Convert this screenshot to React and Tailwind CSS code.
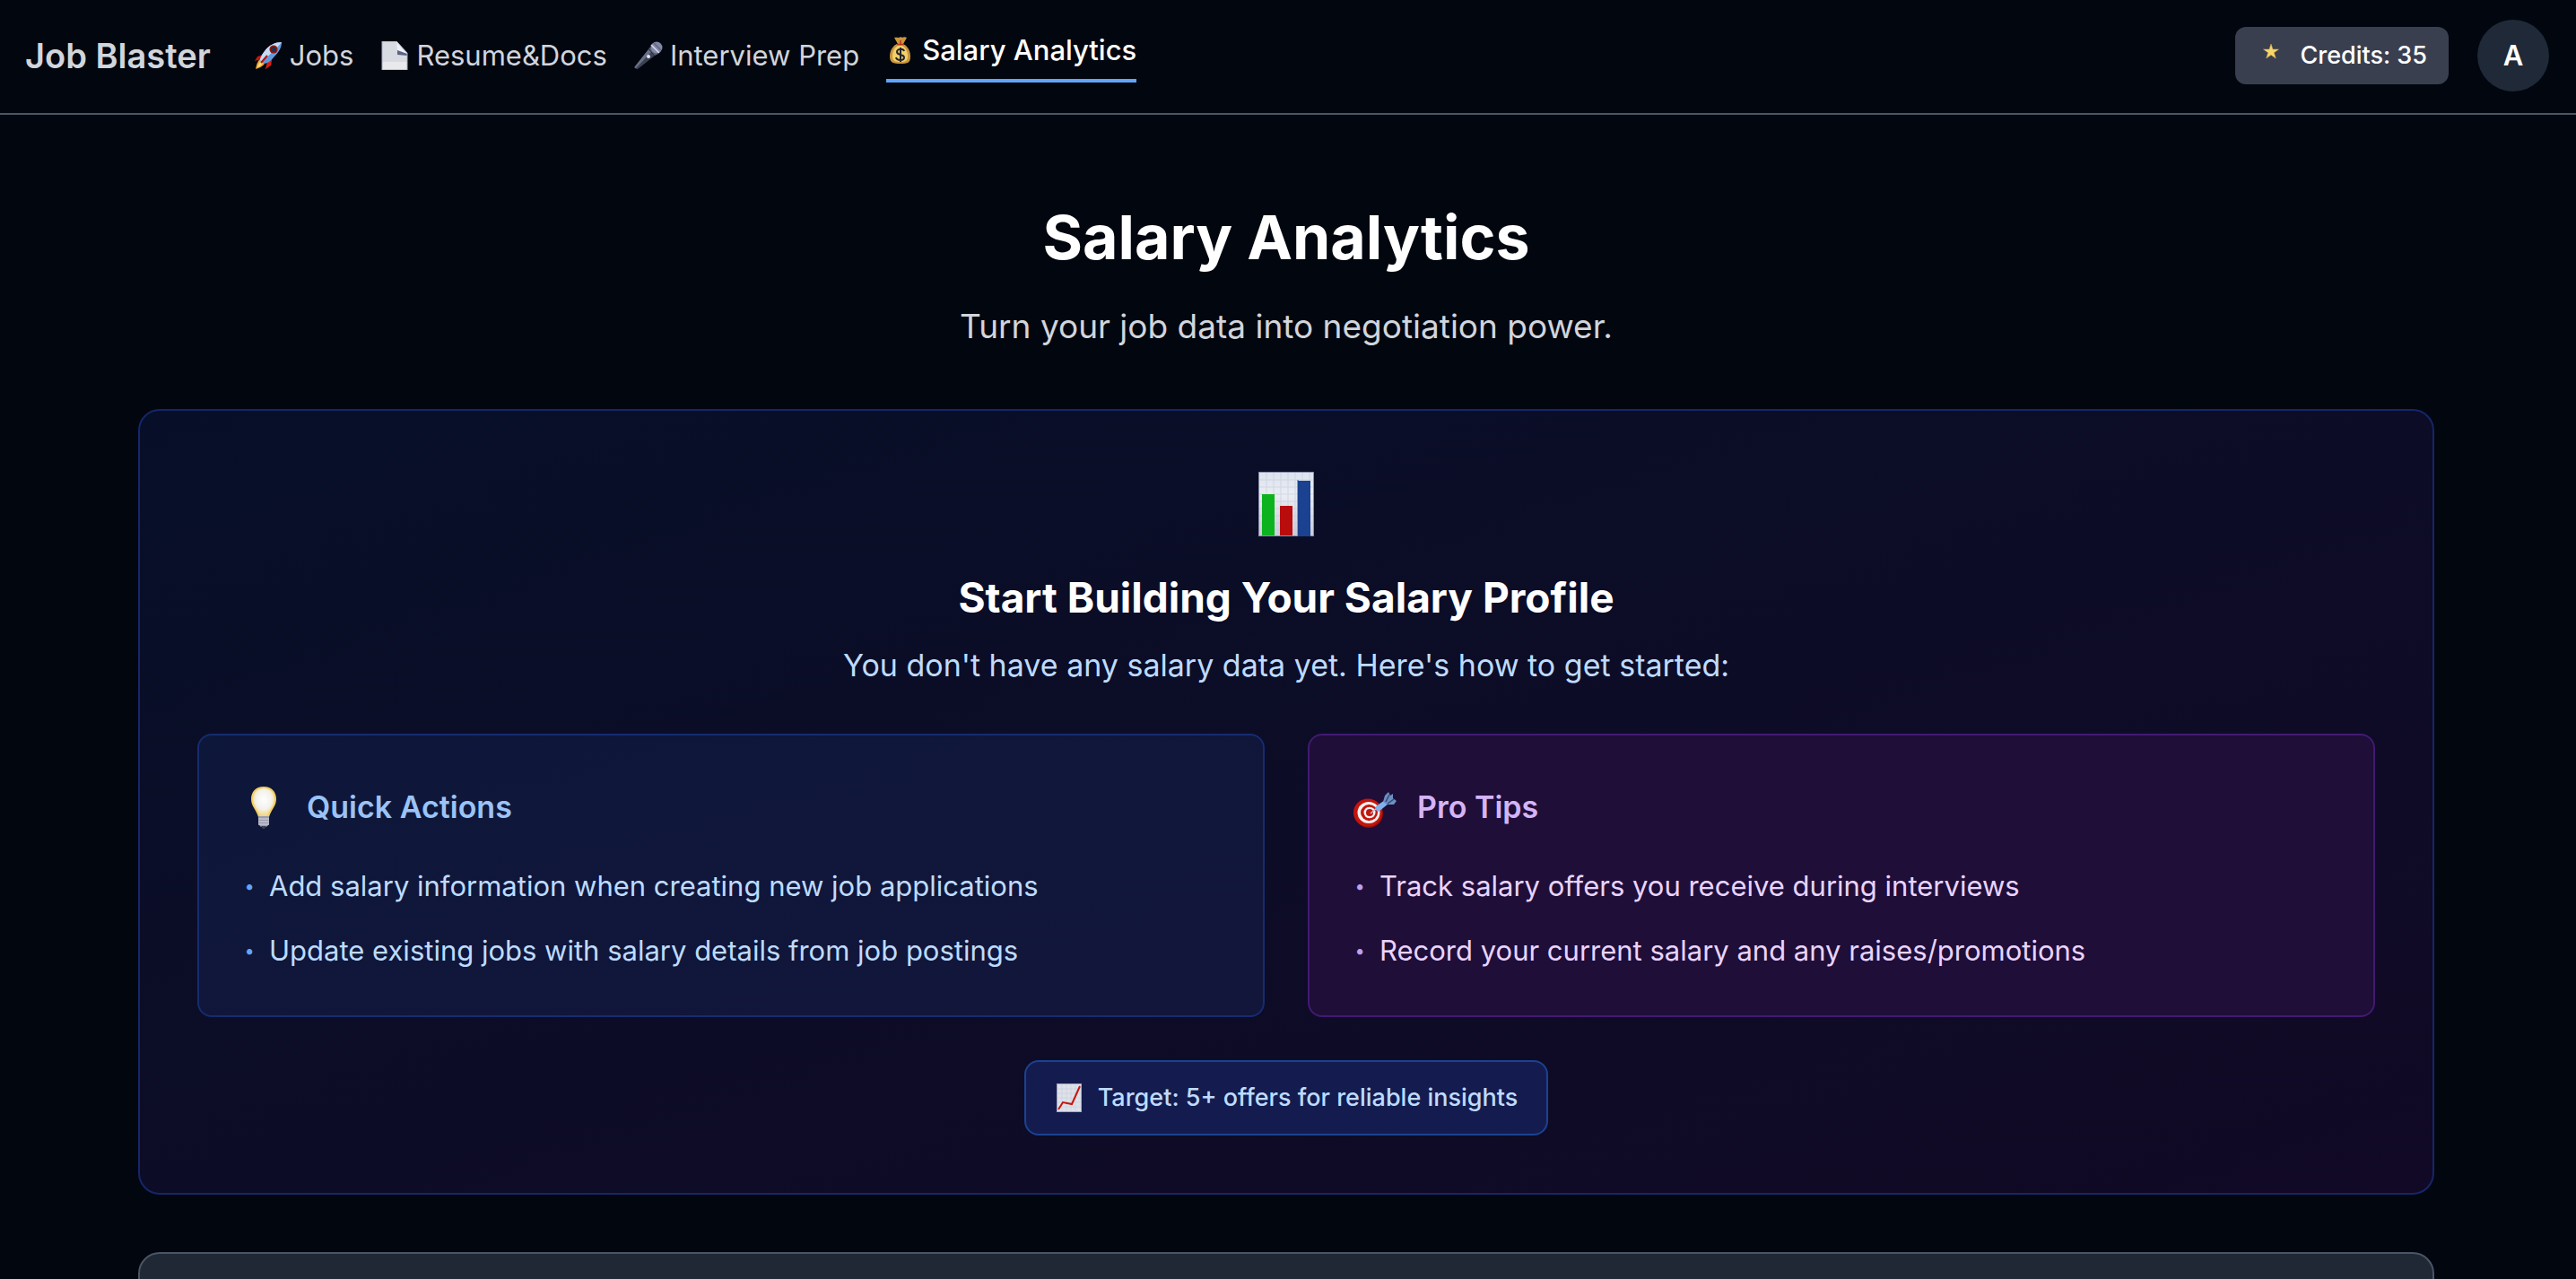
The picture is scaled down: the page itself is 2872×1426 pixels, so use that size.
import React from 'react';

const RocketIcon = () => (
  <svg viewBox="0 0 32 32" className="size-8 shrink-0" aria-hidden="true">
    <path d="M10 15 4 17 1 22 8 20 12 21z" fill="#c4170c" />
    <path d="M17 21 16 27 12 31 14 30 19 26 20 20z" fill="#c4170c" />
    <path d="M15 23 20 20 19 27 13 31z" fill="#d81f10" />
    <path d="M7 20C4 22 3 26 2 31 6 30 10 28 12 25z" fill="#f0a830" />
    <path d="M8 22C6 24 5 26 4 29 7 28 9 26 10 24z" fill="#ffe27a" />
    <path d="M31 1C24 1 17 4 12 11 9 15 7 18 7 21L11 25C15 25 19 22 22 18 28 12 31 7 31 1z" fill="#5f9be0" />
    <path d="M31 1C24 1 17 4 12 11 9 15 7 18 7 21L9 23C15 17 25 9 31 1z" fill="#c9dbf2" />
    <circle cx="22" cy="9" r="4.6" fill="#9c150e" />
    <circle cx="22" cy="9" r="3" fill="#22304f" />
    <path d="M8 24 15 16" stroke="#b3160d" strokeWidth="2" />
  </svg>
);

const DocIcon = () => (
  <svg viewBox="0 0 32 32" className="size-8 shrink-0" aria-hidden="true">
    <path d="M2 0H18L30 13V32H2z" fill="#d9dbe3" />
    <path d="M2 23H30V32H2z" fill="#e8e9ec" />
    <path d="M18 0 30 14 20 12C18 8 19 4 18 0z" fill="#eef1f8" />
    <path d="M19 10 30 14V16L19 15z" fill="#5b6583" />
    <path d="M2 0H18L30 13V32H2z" fill="none" stroke="#a9aec2" strokeWidth="1" />
  </svg>
);

const MicIcon = () => (
  <svg viewBox="0 0 32 32" className="size-8 shrink-0" aria-hidden="true">
    <path d="M16 9 23 16 4 31C2 31 0 30 1 28z" fill="#3a4254" />
    <path d="M16 9 19 12 2 30C0 30 0 29 1 28z" fill="#687086" />
    <path d="M16 8 19 6 27 14 23 16z" fill="#545c74" />
    <circle cx="25" cy="7" r="6.5" fill="#8287a5" />
    <path d="M19 4 28 13" stroke="#d8dcea" strokeWidth="1.5" />
    <path d="M22 2 30 10" stroke="#5d6382" strokeWidth="1.5" />
    <circle cx="16" cy="17" r="2" fill="#e6e9f2" />
  </svg>
);

const MoneyIcon = () => (
  <svg viewBox="0 0 32 32" className="size-8 shrink-0" aria-hidden="true">
    <path d="M9 2C12 1 14 3 16 1 18 3 20 0 23 2L19 9H13z" fill="#c8963f" />
    <path d="M12 9C6 12 4 18 4 23 4 30 8 31 16 31 24 31 27 30 27 23 27 18 25 12 19 9z" fill="#c8963f" />
    <path d="M13 11C9 13 7 18 7 23 7 28 10 29 16 29 21 29 24 28 24 23 24 18 22 13 18 11z" fill="#f3cf68" />
    <path d="M12 9.5H20M16 5V10" stroke="#c0321a" strokeWidth="1.5" />
    <path
      d="M20 17C19 14 12 14 12 18 12 22 20 20 20 24 20 28 12 28 11 24M16 13V29"
      fill="none"
      stroke="#23252d"
      strokeWidth="2"
    />
  </svg>
);

const StarIcon = () => (
  <svg viewBox="0 0 32 32" className="size-8 shrink-0" aria-hidden="true">
    <path
      d="M16 3 18 9H24.5L19.3 12.7 21.3 19 16 15.2 10.7 19 12.7 12.7 7.5 9H14z"
      fill="#f6d66b"
      stroke="#dba63b"
      strokeWidth="0.5"
    />
  </svg>
);

const BarChartIcon = () => (
  <svg viewBox="0 0 64 80" className="h-20 w-16" aria-hidden="true">
    <defs>
      <linearGradient id="barPaper" x1="0" y1="0" x2="0" y2="1">
        <stop offset="0" stopColor="#dde3ee" />
        <stop offset="0.35" stopColor="#e9edf4" />
        <stop offset="1" stopColor="#c9ccda" />
      </linearGradient>
    </defs>
    <rect x="1" y="4" width="62" height="72" fill="#8b90ab" />
    <rect x="2" y="5" width="60" height="70" fill="url(#barPaper)" />
    <path
      d="M2 13H62M2 21H62M2 29H62M2 37H62M2 45H62M2 53H62M2 61H62M2 69H62M10 5V75M18 5V75M26 5V75M34 5V75M42 5V75M50 5V75M58 5V75"
      stroke="#c5cad8"
      strokeWidth="1"
      opacity="0.6"
    />
    <rect x="5" y="29" width="14" height="46" fill="#0db31e" />
    <rect x="25" y="42" width="14" height="33" fill="#b80d0c" />
    <rect x="44" y="13" width="2" height="62" fill="#6fa3e6" />
    <rect x="45" y="14" width="14" height="62" fill="#1a4290" />
  </svg>
);

const BulbIcon = () => (
  <svg viewBox="0 0 48 48" className="size-12 shrink-0" aria-hidden="true">
    <defs>
      <radialGradient id="bulbGlass" cx="0.5" cy="0.4" r="0.6">
        <stop offset="0" stopColor="#ffffff" />
        <stop offset="0.6" stopColor="#f3f1ea" />
        <stop offset="1" stopColor="#f2d478" />
      </radialGradient>
    </defs>
    <path d="M24 1C15 1 10 7 10 15 10 23 16 27 18 35H30C32 27 38 23 38 15 38 7 33 1 24 1z" fill="#f2cf63" />
    <path d="M24 3C16 3 12 8 12 15 12 22 18 27 20 34H28C30 27 36 22 36 15 36 8 32 3 24 3z" fill="url(#bulbGlass)" />
    <path d="M18 34H30V43L27 46H21L18 43z" fill="#9a9cb0" />
    <path d="M18 37H30M18 40H30M18 43H30" stroke="#d9dae4" strokeWidth="1" />
    <path d="M21 45H27L25 48H23z" fill="#3c4053" />
  </svg>
);

const TargetIcon = () => (
  <svg viewBox="0 0 48 48" className="size-12 shrink-0 overflow-visible" aria-hidden="true">
    <ellipse cx="18" cy="31" rx="16" ry="16" fill="#8f0f0a" />
    <ellipse cx="17" cy="30" rx="16" ry="15.5" fill="#c5150d" />
    <ellipse cx="18" cy="30" rx="12.5" ry="12" fill="#f5f1ef" />
    <ellipse cx="18.5" cy="30" rx="9.5" ry="9" fill="#c5150d" />
    <ellipse cx="19" cy="30" rx="6.5" ry="6.2" fill="#f5f1ef" />
    <ellipse cx="19" cy="30" rx="4" ry="4" fill="#c5150d" />
    <path d="M20 31 27 25" stroke="#b7c5dd" strokeWidth="1.5" />
    <path d="M26 23 36 16 40 20 29 29C27 29 25 26 26 23z" fill="#7fb2ec" />
    <path d="M34 18 36 11 40 7 42 11 45 9 45 14 49 17 46 21 38 21z" fill="#6c8fc4" />
    <path d="M37 18 41 10M39 20 46 15" stroke="#33486f" strokeWidth="1.5" />
  </svg>
);

const TrendIcon = () => (
  <svg viewBox="0 0 32 32" className="size-8 shrink-0" aria-hidden="true">
    <rect x="2" y="0" width="28" height="32" fill="#a5a9bd" />
    <rect x="3" y="1" width="26" height="30" fill="#dde1ea" />
    <path
      d="M3 6H29M3 11H29M3 16H29M3 21H29M3 26H29M8 1V31M13 1V31M18 1V31M23 1V31"
      stroke="#c3c8d6"
      strokeWidth="0.5"
    />
    <path d="M4 29 9 21 19 23 28 3" fill="none" stroke="#c6170d" strokeWidth="2" />
  </svg>
);

const navLinks = [
  { label: 'Jobs', href: '#jobs', Icon: RocketIcon },
  { label: 'Resume&Docs', href: '#resume', Icon: DocIcon },
  { label: 'Interview Prep', href: '#interview', Icon: MicIcon },
  { label: 'Salary Analytics', href: '#salary', Icon: MoneyIcon, active: true },
];

const quickActions = [
  'Add salary information when creating new job applications',
  'Update existing jobs with salary details from job postings',
];

const proTips = [
  'Track salary offers you receive during interviews',
  'Record your current salary and any raises/promotions',
];

const Header = () => (
  <header className="flex items-center justify-between border-b-2 border-[#4a5565] pt-[22px] pb-6 pl-7 pr-[30px]">
    <div className="flex items-center gap-12">
      <a href="#home" className="text-[38px] leading-[56px] font-semibold text-[#d1d5dc]">
        Job Blaster
      </a>
      <nav className="flex items-center gap-[30px] text-[31px] leading-[48px]">
        {navLinks.map(({ label, href, Icon, active }) => (
          <a
            key={label}
            href={href}
            aria-current={active ? 'page' : undefined}
            className={
              active
                ? 'flex items-center gap-2 border-b-4 border-[#5fa5f9] pb-2 font-medium text-white'
                : 'flex items-center gap-2 text-[#d1d5dc]'
            }
          >
            <Icon />
            {label}
          </a>
        ))}
      </nav>
    </div>

    <div className="flex items-center gap-8">
      <button
        type="button"
        className="flex h-16 items-center gap-4 rounded-xl bg-[#3a3f50] px-6 text-[27px] font-medium text-white"
      >
        <StarIcon />
        Credits: 35
      </button>
      <button
        type="button"
        className="size-20 rounded-full bg-[#1f2937] text-[31px] font-semibold text-white"
      >
        A
      </button>
    </div>
  </header>
);

const App = () => {
  return (
    <div className="h-screen overflow-hidden bg-[#02060f] font-['Inter','Liberation_Sans',sans-serif]">
      <Header />

      <main className="pt-24 pr-1">
        <div className="mx-auto max-w-[2560px]">
          {/* Page title */}
          <div className="text-center">
            <h1 className="text-[68px] leading-[80px] font-bold text-white">Salary Analytics</h1>
            <p className="mt-8 text-[37px] leading-[56px] text-[#d1d5dc]">
              Turn your job data into negotiation power.
            </p>
          </div>

          {/* Empty state */}
          <section className="mt-16 flex flex-col items-center rounded-3xl border-2 border-[#15266a] bg-linear-to-br from-[#070f28] to-[#110925] p-16">
            <BarChartIcon />
            <h2 className="mt-8 text-[46px] leading-[64px] font-bold text-white">
              Start Building Your Salary Profile
            </h2>
            <p className="mt-4 text-[34px] leading-[56px] text-[#bedbff]">
              You don't have any salary data yet. Here's how to get started:
            </p>

            <div className="mt-12 grid w-full grid-cols-2 gap-12">
              <div className="rounded-2xl border-2 border-[#162c70] bg-linear-to-br from-[#0d173a] to-[#12163a] p-12">
                <h3 className="flex items-center gap-6 text-[34px] leading-[64px] font-semibold text-[#9ac3f8]">
                  <BulbIcon />
                  Quick Actions
                </h3>
                <ul className="mt-8 space-y-6 text-[31px] leading-[48px] text-[#bedbff]">
                  {quickActions.map((item) => (
                    <li key={item} className="flex gap-3.5">
                      <span className="w-4 text-center text-xl leading-[48px] text-[#5fa5f9]">•</span>
                      {item}
                    </li>
                  ))}
                </ul>
              </div>

              <div className="rounded-2xl border-2 border-[#421a72] bg-[#1f0e38] p-12">
                <h3 className="flex items-center gap-6 text-[34px] leading-[64px] font-semibold text-[#d4b4f8]">
                  <TargetIcon />
                  Pro Tips
                </h3>
                <ul className="mt-8 space-y-6 text-[31px] leading-[48px] text-[#e9d4ff]">
                  {proTips.map((item) => (
                    <li key={item} className="flex gap-3.5">
                      <span className="w-4 text-center text-xl leading-[48px] text-[#b9a2ef]">•</span>
                      {item}
                    </li>
                  ))}
                </ul>
              </div>
            </div>

            <div className="mt-12 flex items-center gap-4 rounded-2xl border-2 border-[#1b4290] bg-[#141c4f] px-8 py-5 text-[27px] leading-[40px] font-medium text-[#bedbff]">
              <TrendIcon />
              Target: 5+ offers for reliable insights
            </div>
          </section>

          {/* Next panel, runs past the fold */}
          <section className="mt-16 h-96 rounded-3xl border-2 border-[#4a5565] bg-[#1f2834]"></section>
        </div>
      </main>
    </div>
  );
};

export default App;
